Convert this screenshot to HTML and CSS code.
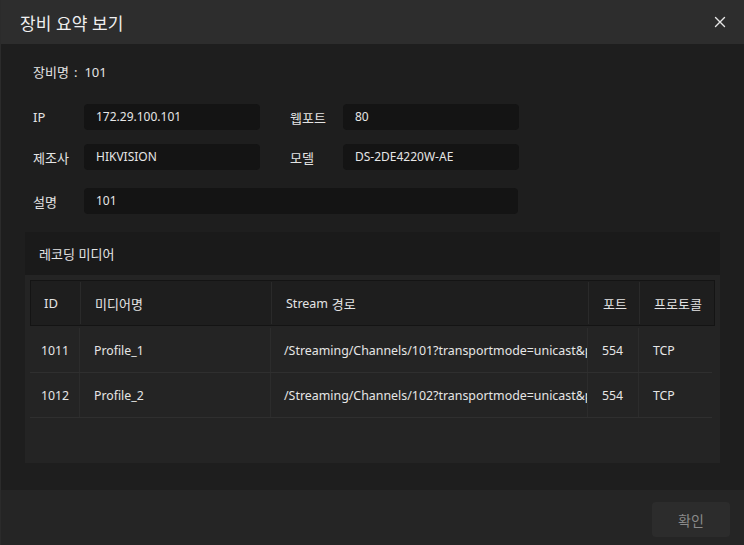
FILE: index.html
```html
<!DOCTYPE html>
<html lang="ko">
<head>
<meta charset="utf-8">
<title>장비 요약 보기</title>
<link rel="stylesheet" href="styles.css">
</head>
<body>
<div class="dialog">
  <div class="header">
    <span class="title">장비 요약 보기</span>
    <span class="close">
      <svg width="12" height="12" viewBox="0 0 12 12"><path d="M1.5 1.5 L10.5 10.5 M10.5 1.5 L1.5 10.5" stroke="#e6e6e6" stroke-width="1.4" stroke-linecap="round"/></svg>
    </span>
  </div>
  <div class="content">
    <div class="name-row">장비명<span class="colon">:</span><span class="lat">101</span></div>
    <div class="field-row row1">
      <span class="label lat">IP</span>
      <span class="input lat">172.29.100.101</span>
      <span class="label label2">웹포트</span>
      <span class="input lat">80</span>
    </div>
    <div class="field-row row2">
      <span class="label">제조사</span>
      <span class="input lat">HIKVISION</span>
      <span class="label label2">모델</span>
      <span class="input lat">DS-2DE4220W-AE</span>
    </div>
    <div class="field-row row3">
      <span class="label">설명</span>
      <span class="input wide lat">101</span>
    </div>
    <div class="panel">
      <div class="panel-head">레코딩 미디어</div>
      <div class="panel-body">
        <div class="thead">
          <div class="th c-id lat">ID</div>
          <div class="th">미디어명</div>
          <div class="th"><span class="lat">Stream</span>&nbsp;경로</div>
          <div class="th">포트</div>
          <div class="th last">프로토콜</div>
        </div>
        <div class="trow">
          <div class="td c-id">1011</div>
          <div class="td">Profile_1</div>
          <div class="td clip">/Streaming/Channels/101?transportmode=unicast&amp;profile=Profile_1</div>
          <div class="td">554</div>
          <div class="td last">TCP</div>
        </div>
        <div class="trow">
          <div class="td c-id">1012</div>
          <div class="td">Profile_2</div>
          <div class="td clip">/Streaming/Channels/102?transportmode=unicast&amp;profile=Profile_2</div>
          <div class="td">554</div>
          <div class="td last">TCP</div>
        </div>
      </div>
    </div>
  </div>
  <div class="footer">
    <button class="ok">확인</button>
  </div>
</div>
</body>
</html>
```
FILE: styles.css
```css
html, body {
  margin: 0;
  padding: 0;
  background: #1e1e1e;
}
body {
  font-family: "Noto Sans CJK KR", "Noto Sans", sans-serif;
  color: #e4e4e4;
  font-size: 13px;
}
.lat {
  font-family: "Noto Sans", "Noto Sans CJK KR", sans-serif;
  font-size: 12px;
}
.dialog {
  width: 744px;
  height: 545px;
  display: flex;
  flex-direction: column;
  box-sizing: border-box;
  border-left: 1px solid #2b2b2b;
  background: #1e1e1e;
}
.header {
  height: 44px;
  flex: none;
  background: #2d2d2d;
  display: flex;
  align-items: center;
  justify-content: space-between;
  padding: 0 18px 0 19px;
}
.title {
  font-size: 17px;
  color: #f0f0f0;
}
.close {
  display: flex;
  width: 12px;
  height: 12px;
}
.content {
  flex: 1;
  padding: 0 24px;
}
.name-row {
  margin-top: 18px;
  height: 20px;
  line-height: 20px;
  padding-left: 8px;
}
.colon {
  font-family: "Noto Sans", sans-serif;
  margin: 0 7px 0 5px;
}
.name-row .lat {
  font-size: 13px;
}
.field-row {
  display: flex;
  align-items: center;
  padding-left: 8px;
  height: 26px;
}
.row1 { margin-top: 22px; }
.row2 { margin-top: 14px; }
.row3 { margin-top: 18px; }
.label {
  width: 51px;
}
.label.lat {
  font-size: 13px;
}
.label2 {
  margin-left: 30px;
  width: 53px;
}
.input {
  width: 176px;
  height: 26px;
  line-height: 26px;
  background: #141414;
  border-radius: 4px;
  padding-left: 12px;
  box-sizing: border-box;
  color: #e6e6e6;
}
.input.wide {
  width: 434px;
}
.panel {
  margin-top: 18px;
  height: 231px;
  display: flex;
  flex-direction: column;
}
.panel-head {
  height: 43px;
  flex: none;
  background: #1a1a1a;
  display: flex;
  align-items: center;
  padding-left: 14px;
}
.panel-body {
  flex: 1;
  background: #242424;
  padding: 5px;
}
.thead {
  display: grid;
  grid-template-columns: 50px 191px 317px 51px 1fr;
  height: 46px;
  background: #1e1e1e;
  border: 1px solid #141414;
  box-sizing: border-box;
  margin-bottom: 2px;
}
.th {
  display: flex;
  align-items: center;
  padding-left: 14px;
  border-right: 1px solid #2a2a2a;
  margin: 1px 0;
}
.th.c-id { padding-left: 13px; font-size: 13px; }
.th .lat { font-size: 12.5px; }
.th.last { border-right: none; }
.trow {
  display: grid;
  grid-template-columns: 50px 191px 317px 51px 1fr;
  width: 682px;
  height: 45px;
  border-bottom: 1px solid #2f2f2f;
  box-sizing: border-box;
  font-family: "Noto Sans", "Noto Sans CJK KR", sans-serif;
  font-size: 12.3px;
}
.td {
  display: flex;
  align-items: center;
  padding-left: 14px;
  border-right: 1px solid #2c2c2c;
  white-space: nowrap;
  overflow: hidden;
  color: #e6e6e6;
}
.td.c-id { padding-left: 11px; }
.td.last { border-right: none; }
.td.clip { padding-left: 13px; font-size: 12.4px; }
.footer {
  height: 55px;
  flex: none;
  background: #252525;
  display: flex;
  justify-content: flex-end;
  align-items: flex-start;
  padding: 12px 14px 0 0;
  box-sizing: border-box;
}
.ok {
  width: 78px;
  height: 35px;
  background: #2c2c2c;
  border: none;
  border-radius: 4px;
  color: #8a8a8a;
  font-family: "Noto Sans CJK KR", sans-serif;
  font-size: 14px;
}
```
